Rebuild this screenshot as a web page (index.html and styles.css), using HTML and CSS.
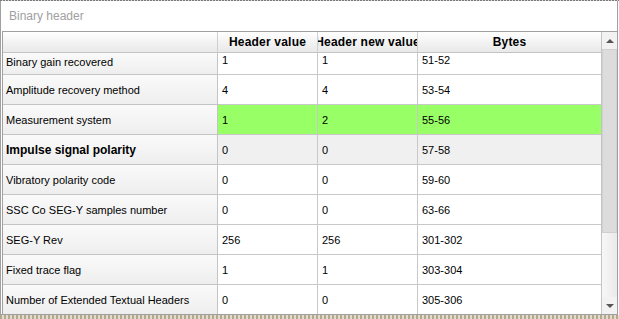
FILE: index.html
```html
<!DOCTYPE html>
<html lang="en">
<head>
    <meta charset="UTF-8">
    <title>Binary header</title>
    <link rel="stylesheet" href="styles.css">
</head>
<body>
    <div class="strip"></div>
    <div class="painel">
        <div class="titulo">Binary header</div>
        <div class="tabela">
            <div class="grade">
                <div class="cab canto"></div>
                <div class="cab"><span>Header value</span></div>
                <div class="cab"><span>Header new value</span></div>
                <div class="cab"><span>Bytes</span></div>

                <div class="lin primeira">Binary gain recovered</div>
                <div class="cel primeira">1</div>
                <div class="cel primeira">1</div>
                <div class="cel primeira">51-52</div>

                <div class="lin">Amplitude recovery method</div>
                <div class="cel">4</div>
                <div class="cel">4</div>
                <div class="cel">53-54</div>

                <div class="lin">Measurement system</div>
                <div class="cel verde">1</div>
                <div class="cel verde">2</div>
                <div class="cel verde">55-56</div>

                <div class="lin negrito">Impulse signal polarity</div>
                <div class="cel atual">0</div>
                <div class="cel atual">0</div>
                <div class="cel atual">57-58</div>

                <div class="lin">Vibratory polarity code</div>
                <div class="cel">0</div>
                <div class="cel">0</div>
                <div class="cel">59-60</div>

                <div class="lin">SSC Co SEG-Y samples number</div>
                <div class="cel">0</div>
                <div class="cel">0</div>
                <div class="cel">63-66</div>

                <div class="lin">SEG-Y Rev</div>
                <div class="cel">256</div>
                <div class="cel">256</div>
                <div class="cel">301-302</div>

                <div class="lin">Fixed trace flag</div>
                <div class="cel">1</div>
                <div class="cel">1</div>
                <div class="cel">303-304</div>

                <div class="lin">Number of Extended Textual Headers</div>
                <div class="cel">0</div>
                <div class="cel">0</div>
                <div class="cel">305-306</div>
            </div>
            <div class="rolagem">
                <div class="seta"><span class="cima"></span></div>
                <div class="polegar"></div>
                <div class="trilho"></div>
                <div class="seta"><span class="baixo"></span></div>
            </div>
        </div>
    </div>
    <div class="strip baixo-strip"></div>
</body>
</html>
```

FILE: styles.css
```css
html, body {
    margin: 0;
    padding: 0;
    width: 619px;
    height: 319px;
    overflow: hidden;
    font-family: "Liberation Sans", Arial, sans-serif;
    font-size: 11px;
    color: #000;
    background: #fff;
}
.strip {
    height: 1px;
    background: repeating-linear-gradient(90deg, #7a7a80 0, #7a7a80 2px, #d8d4cc 2px, #d8d4cc 3px);
}
.baixo-strip {
    height: 4px;
    background: repeating-linear-gradient(90deg, #b8a88a 0, #b8a88a 2px, #e0dcd4 2px, #e0dcd4 4px);
}
.painel {
    height: 314px;
    margin-right: 1px;
    border-left: 1px solid #a0a0a0;
    border-right: 1px solid #a0a0a0;
    border-bottom: 1px solid #a0a0a0;
    box-sizing: border-box;
    background: #fff;
    display: flex;
    flex-direction: column;
}
.titulo {
    height: 30px;
    padding-left: 8px;
    font-size: 12px;
    line-height: 30px;
    color: #a0a0a0;
}
.tabela {
    display: flex;
    margin-left: 1px;
    border: 1px solid #a0a0a0;
    border-right: none;
    height: 284px;
    box-sizing: border-box;
}
.grade {
    display: grid;
    grid-template-columns: 215px 100px 100px 184px;
    grid-template-rows: 21px 22px repeat(8, 30px);
    width: 599px;
    overflow: hidden;
}
.cab {
    display: flex;
    justify-content: center;
    align-items: center;
    overflow: hidden;
    white-space: nowrap;
    font-weight: bold;
    font-size: 12px;
    letter-spacing: 0.2px;
    background: linear-gradient(#ffffff, #f3f3f3 50%, #e9e9e9);
    border-right: 1px solid #d0d0d0;
    border-bottom: 1px solid #c4c4c4;
}
.cab span {
    flex-shrink: 0;
}
.lin {
    display: flex;
    align-items: center;
    padding-left: 3px;
    white-space: nowrap;
    background: linear-gradient(#fafafa, #eeeeee);
    border-right: 1px solid #c4c4c4;
    border-bottom: 1px solid #c4c4c4;
}
.cel {
    display: flex;
    align-items: center;
    padding-left: 4px;
    white-space: nowrap;
    border-right: 1px solid #c8c8c8;
    border-bottom: 1px solid #c8c8c8;
}
.lin.primeira {
    padding-bottom: 4px;
}
.cel.primeira {
    align-items: flex-start;
    padding-top: 1px;
}
.negrito {
    font-weight: bold;
    font-size: 12px;
}
.verde {
    background: #99ff66;
}
.atual {
    background: #f0f0f0;
}
.rolagem {
    width: 15px;
    display: flex;
    flex-direction: column;
    border-left: 1px solid #c4c4c4;
    background: #ececec;
}
.seta {
    height: 17px;
    display: flex;
    align-items: center;
    justify-content: center;
    background: #f2f2f2;
}
.polegar {
    height: 184px;
    background: #dcdcdc;
    border: 1px solid #d0d0d0;
    box-sizing: border-box;
}
.trilho {
    flex: 1;
    background: linear-gradient(90deg, #f7f7f7, #eaeaea);
}
.cima, .baixo {
    width: 0;
    height: 0;
    border-left: 4px solid transparent;
    border-right: 4px solid transparent;
}
.cima {
    border-bottom: 4px solid #555;
}
.baixo {
    border-top: 4px solid #555;
}
```
